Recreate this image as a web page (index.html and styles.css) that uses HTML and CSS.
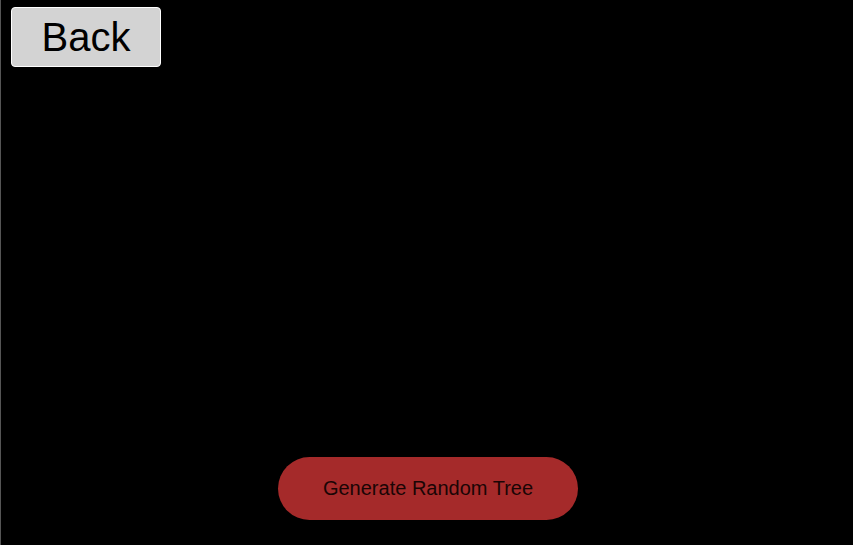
FILE: index.html
```html
<!DOCTYPE html>
<html>
<head>
<meta charset="utf-8">
<link rel="stylesheet" href="styles.css">
</head>
<body>
<div class="page">
  <button class="back">Back</button>
  <button class="generate">Generate Random Tree</button>
</div>
</body>
</html>
```
FILE: styles.css
```css
html, body {
  margin: 0;
  padding: 0;
  background: #000;
  height: 100%;
  overflow: hidden;
}
.page {
  box-sizing: border-box;
  height: 545px;
  display: flex;
  flex-direction: column;
  align-items: flex-start;
  border-left: 1px solid #555;
  padding: 7px 0 25px 10px;
}
.back {
  box-sizing: border-box;
  width: 150px;
  height: 60px;
  background: #d3d3d3;
  border: 1px solid #fff;
  border-radius: 4px;
  font-family: "Liberation Sans", Arial, sans-serif;
  font-size: 40px;
  color: #000;
  padding: 0;
  line-height: 1;
}
.generate {
  margin-top: auto;
  align-self: flex-start;
  margin-left: 267px;
  box-sizing: border-box;
  width: 300px;
  height: 63px;
  background: #a52a2a;
  border: none;
  border-radius: 32px;
  font-family: "Liberation Sans", Arial, sans-serif;
  font-size: 20px;
  color: #1a0505;
  padding: 0;
}
```
